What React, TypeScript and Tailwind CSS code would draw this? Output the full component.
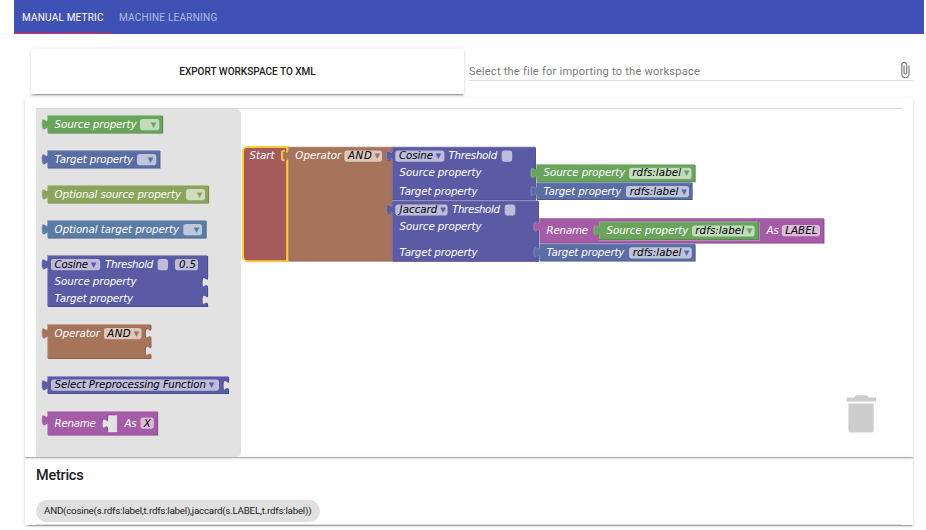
import React from "react";

const GREEN = "#68a55b";
const NAVY = "#5b6da5";
const OLIVE = "#8ca55b";
const STEEL = "#5b7ca5";
const VIOLET = "#5b5ba5";
const BROWN = "#a5745b";
const PURPLE = "#a55ba5";
const RED = "#a55b5b";

const TAB = "c0,-7 -5.6,5.6 -5.6,-5.25 s5.6,1.75 5.6,-5.25";
const SOCKET = "c0,7 -5.6,-5.6 -5.6,5.25 s5.6,-1.75 5.6,5.25";

type BlockProps = {
  x: number;
  y: number;
  w: number;
  h: number;
  fill: string;
  sockets?: number[];
  hole?: { x: number; y: number; w: number; h: number };
  children?: React.ReactNode;
};

/** A value block: a bevelled rectangle with a puzzle tab on its left edge. */
function Block({ x, y, w, h, fill, sockets = [], hole, children }: BlockProps) {
  const right = sockets.map((s) => `V${y + s} ${SOCKET}`).join(" ");
  const inner = hole
    ? `M${hole.x},${hole.y} V${hole.y + 3.5} ${SOCKET} V${hole.y + hole.h} h${hole.w} V${hole.y} Z`
    : "";
  const outline = `M${x},${y} H${x + w} ${right} V${y + h} H${x} V${y + 14} ${TAB} Z ${inner}`;
  return (
    <g>
      <g transform="translate(-0.2 -0.4)">
        <path d={outline} transform="translate(0.8 0.8)" fill={fill} fillRule="evenodd" />
        <path d={outline} transform="translate(0.8 0.8)" fill="#000" fillOpacity={0.2} fillRule="evenodd" />
        <path d={outline} fill={fill} fillRule="evenodd" />
        <path
          d={`M${x + 0.35},${y + h - 0.4} V${y + 14} ${TAB} V${y + 0.35} H${x + w - 0.4}`}
          fill="none"
          stroke="#fff"
          strokeOpacity={0.3}
          strokeWidth={0.7}
        />
        {hole && (
          <path
            d={`M${hole.x},${hole.y + hole.h} h${hole.w} v${-hole.h}`}
            fill="none"
            stroke="#fff"
            strokeOpacity={0.4}
            strokeWidth={0.7}
          />
        )}
      </g>
      {children}
    </g>
  );
}

/** Block label running from x to end on baseline y. */
function Label({ x, end, y, dark, children }: { x: number; end: number; y: number; dark?: boolean; children: string }) {
  return (
    <text x={x} y={y} textLength={end - x} lengthAdjust="spacing" fill={dark ? "#000" : "#fff"}>
      {children}
    </text>
  );
}

/** Rounded field, with a dropdown arrow when one is given. */
function Field({ x, end, y, arrow, fill }: { x: number; end: number; y: number; arrow?: number; fill?: string }) {
  return (
    <g>
      <rect x={x} y={y} width={end - x} height={11.2} rx={2.8} fill="#fff" fillOpacity={0.6} />
      {arrow !== undefined && (
        <text x={arrow} y={y + 8.6} textAnchor="middle" fill={fill} className="text-[11px] not-italic">
          ▾
        </text>
      )}
    </g>
  );
}

const textClass = "block font-['DejaVu_Sans',sans-serif] text-[10.27px] italic";

function Toolbox() {
  return (
    <div className="h-[348px] w-[205px] rounded-r-[5px] bg-[#e2e2e2]">
      <svg width="205" height="348" viewBox="36 109 205 348" className={textClass}>
        <Block x={47.5} y={115.6} w={115} h={17.5} fill={GREEN}>
          <Label x={54.6} end={136.5} y={128}>Source property</Label>
          <Field x={140} end={159.3} y={119} arrow={153.4} fill={GREEN} />
        </Block>
        <Block x={47.5} y={150.6} w={112.3} h={17.5} fill={NAVY}>
          <Label x={54.6} end={133.2} y={163}>Target property</Label>
          <Field x={137} end={156.3} y={154} arrow={150.4} fill={NAVY} />
        </Block>
        <Block x={47.5} y={185.6} w={161} h={17.5} fill={OLIVE}>
          <Label x={54.6} end={181} y={198}>Optional source property</Label>
          <Field x={186} end={205} y={189} arrow={199.4} fill={OLIVE} />
        </Block>
        <Block x={47.5} y={220.6} w={158.5} h={17.5} fill={STEEL}>
          <Label x={54.6} end={179} y={233}>Optional target property</Label>
          <Field x={183.3} end={202} y={224} arrow={196.4} fill={STEEL} />
        </Block>
        <Block x={47.5} y={255.6} w={160} h={51} fill={VIOLET} sockets={[21.5, 39]}>
          <Field x={51} end={100.2} y={259} arrow={93.4} fill={VIOLET} />
          <Label x={54.6} end={88} y={267.7} dark>Cosine</Label>
          <Label x={105} end={153.3} y={267.7}>Threshold</Label>
          <Field x={157.6} end={168} y={259} />
          <Field x={175} end={198} y={259} />
          <Label x={179} end={196} y={267.7} dark>0.5</Label>
          <Label x={54.6} end={136.5} y={285}>Source property</Label>
          <Label x={54.6} end={133.2} y={302}>Target property</Label>
        </Block>
        <Block x={47.5} y={324.6} w={103.3} h={34} fill={BROWN} sockets={[3.5, 21]}>
          <Label x={54.6} end={100} y={337}>Operator</Label>
          <Field x={104} end={141.5} y={328} arrow={136.4} fill={BROWN} />
          <Label x={107.2} end={130.7} y={337} dark>AND</Label>
        </Block>
        <Block x={47.5} y={376.6} w={181} h={17} fill={VIOLET} sockets={[3.5]}>
          <Field x={51} end={219} y={379.6} arrow={211.5} fill={VIOLET} />
          <Label x={54.6} end={206} y={388.3} dark>Select Preprocessing Function</Label>
        </Block>
        <Block x={47.5} y={411.6} w={110} h={23.6} fill={PURPLE} hole={{ x: 107.5, y: 414.8, w: 9.5, h: 17.6 }}>
          <Label x={54.6} end={95.8} y={427}>Rename</Label>
          <Label x={124.5} end={136.6} y={427}>As</Label>
          <Field x={140.4} end={153.8} y={417.6} />
          <Label x={143.8} end={150.6} y={427} dark>X</Label>
        </Block>
      </svg>
    </div>
  );
}

function Workspace() {
  return (
    <svg width="661" height="348" viewBox="241 109 661 348" className={textClass}>
      <path
        d="M247.5,147 H287.4 V261.2 H247.5 a4.5,4.5 0 0 1 -4.5,-4.5 V151.5 a4.5,4.5 0 0 1 4.5,-4.5 Z"
        fill={RED}
        stroke="#fc3"
        strokeWidth={2.1}
      />
      <Label x={249.4} end={274.6} y={159}>Start</Label>

      <Block x={288} y={147.2} w={104} h={114} fill={BROWN}>
        <Label x={295.3} end={341.2} y={159}>Operator</Label>
        <Field x={344.3} end={382} y={150.6} arrow={377.2} fill={BROWN} />
        <Label x={348} end={371.8} y={159} dark>AND</Label>
      </Block>
      <path
        d="M287.3,146.5 V150.4 M287.3,160.8 V262 M284.6,150.9 h-1 q-1.7,0 -1.7,1.7 v6 q0,1.7 1.7,1.7 h1"
        fill="none"
        stroke="#fc3"
        strokeWidth={1.7}
      />

      <Block x={392} y={147.2} w={143.3} h={53} fill={VIOLET}>
        <Field x={395.3} end={444.4} y={150.6} arrow={438.2} fill={VIOLET} />
        <Label x={399} end={433} y={159} dark>Cosine</Label>
        <Label x={448.6} end={497.2} y={159}>Threshold</Label>
        <Field x={501.7} end={512.2} y={150.6} />
        <Label x={399.6} end={481.5} y={175.8}>Source property</Label>
        <Label x={399.6} end={477.5} y={194.8}>Target property</Label>
      </Block>

      <Block x={392} y={200.8} w={146.3} h={60.5} fill={VIOLET}>
        <Field x={395.3} end={447.6} y={204.4} arrow={443} fill={VIOLET} />
        <Label x={399.6} end={437.4} y={213} dark>Jaccard</Label>
        <Label x={452} end={500} y={213}>Threshold</Label>
        <Field x={504.7} end={515.3} y={204.4} />
        <Label x={399.6} end={481.5} y={230}>Source property</Label>
        <Label x={399.6} end={477.5} y={256}>Target property</Label>
      </Block>

      <Block x={536.4} y={164.6} w={158.6} h={17.2} fill={GREEN}>
        <Label x={543.5} end={625.4} y={176}>Source property</Label>
        <Field x={629} end={691.5} y={167.8} arrow={686.4} fill={GREEN} />
        <Label x={632.3} end={681} y={176} dark>rdfs:label</Label>
      </Block>
      <Block x={536.4} y={182.7} w={155.6} h={17} fill={NAVY}>
        <Label x={543.5} end={621.3} y={195}>Target property</Label>
        <Field x={626} end={689} y={186} arrow={684} fill={NAVY} />
        <Label x={629.8} end={678.4} y={195} dark>rdfs:label</Label>
      </Block>

      <Block x={539.4} y={218.4} w={284.4} h={24.8} fill={PURPLE}>
        <Label x={546.4} end={588.2} y={234}>Rename</Label>
        <Block x={599.4} y={222} w={159} h={17.6} fill={GREEN}>
          <Label x={606.5} end={688.4} y={234}>Source property</Label>
          <path d="M599.4,240.5 H759.4 V222" fill="none" stroke="#fff" strokeOpacity={0.4} strokeWidth={0.7} />
          <Field x={692} end={754.6} y={225.4} arrow={749.4} fill={GREEN} />
          <Label x={695.3} end={744} y={234} dark>rdfs:label</Label>
        </Block>
        <Label x={766.5} end={778.8} y={234}>As</Label>
        <Field x={781.8} end={820} y={225} />
        <Label x={785.3} end={817.4} y={234} dark>LABEL</Label>
      </Block>
      <Block x={539.4} y={244} w={155.6} h={17.2} fill={NAVY}>
        <Label x={546.5} end={624.4} y={256}>Target property</Label>
        <Field x={629} end={691.8} y={247.2} arrow={686.4} fill={NAVY} />
        <Label x={632.8} end={681.4} y={256} dark>rdfs:label</Label>
      </Block>

      <g fill="#cdcdcd">
        <path d="M846.5,397.4 h7.8 l1.7,-2.2 h11 l1.7,2.2 h7.3 v4.2 h-29.5 Z" />
        <path d="M848.4,403.5 h25.3 v26.5 a2.6,2.6 0 0 1 -2.6,2.6 h-20.1 a2.6,2.6 0 0 1 -2.6,-2.6 Z" />
      </g>
    </svg>
  );
}

const raised =
  "shadow-[0_1.5px_1.5px_0_rgba(0,0,0,0.14),0_0.75px_3.75px_0_rgba(0,0,0,0.12),0_2px_1px_-1.5px_rgba(0,0,0,0.2)]";

export default function App() {
  return (
    <div className="h-[530px] w-[926px] overflow-hidden bg-white font-['Roboto',sans-serif] text-[#212121]">
      <nav className="ml-[14px] flex h-[34px] w-[910px] bg-[#3f51b5] text-[10px] leading-[36px] text-white">
        <div className="h-[34px] w-[97px] whitespace-nowrap border-b border-[#e91e63] pl-2 tracking-[0.2px]">MANUAL METRIC</div>
        <div className="whitespace-nowrap pl-2 tracking-[0.25px] text-white/60">MACHINE LEARNING</div>
      </nav>

      <div className="mt-[15px] flex h-[49px] pl-[31px]">
        <button
          className={`h-[45px] w-[433px] rounded-[1.5px] bg-white text-[10px] font-medium tracking-[0.01px] ${raised}`}
        >
          EXPORT WORKSPACE TO XML
        </button>
        <div className="ml-[5px] flex h-[32px] w-[444px] items-end border-b border-[#dedede] text-[11px] tracking-[0.25px] text-[#7a7a7a]">
          <span className="flex-1 leading-4">Select the file for importing to the workspace</span>
          <svg width="18" height="18" viewBox="0 0 24 24" className="-mr-px mb-[1px]" fill="#757575">
            <path d="M16.5 6v11.5c0 2.21-1.79 4-4 4s-4-1.79-4-4V5c0-1.38 1.12-2.5 2.5-2.5s2.5 1.12 2.5 2.5v10.5c0 .55-.45 1-1 1s-1-.45-1-1V6H10v9.5c0 1.38 1.12 2.5 2.5 2.5s2.5-1.12 2.5-2.5V5c0-2.21-1.79-4-4-4S7 2.79 7 5v12.5c0 3.04 2.46 5.5 5.5 5.5s5.5-2.46 5.5-5.5V6h-1.5z" />
          </svg>
        </div>
      </div>

      <main className={`ml-[25px] h-[359px] w-[888px] pl-[11px] pt-[10px] ${raised}`}>
        <div className="flex w-[866px] border-t border-[#d6d6d6]">
          <Toolbox />
          <Workspace />
        </div>
      </main>

      <section className={`ml-[25px] h-[68px] w-[888px] border-t border-[#b4b4b4] pl-[11px] ${raised}`}>
        <h2 className="pt-[8px] text-[14.5px] font-medium leading-5 tracking-[-0.25px]">Metrics</h2>
        <div className="mt-[14px] flex h-[22px] w-[284px] items-center whitespace-nowrap rounded-full bg-[#e0e0e0] pl-2 text-[9.75px] tracking-[-0.215px]">
          AND(cosine(s.rdfs:label,t.rdfs:label),jaccard(s.LABEL,t.rdfs:label))
        </div>
        <div className="mt-[2px] h-px w-[866px] bg-[#e0e0e0]" />
      </section>
    </div>
  );
}
